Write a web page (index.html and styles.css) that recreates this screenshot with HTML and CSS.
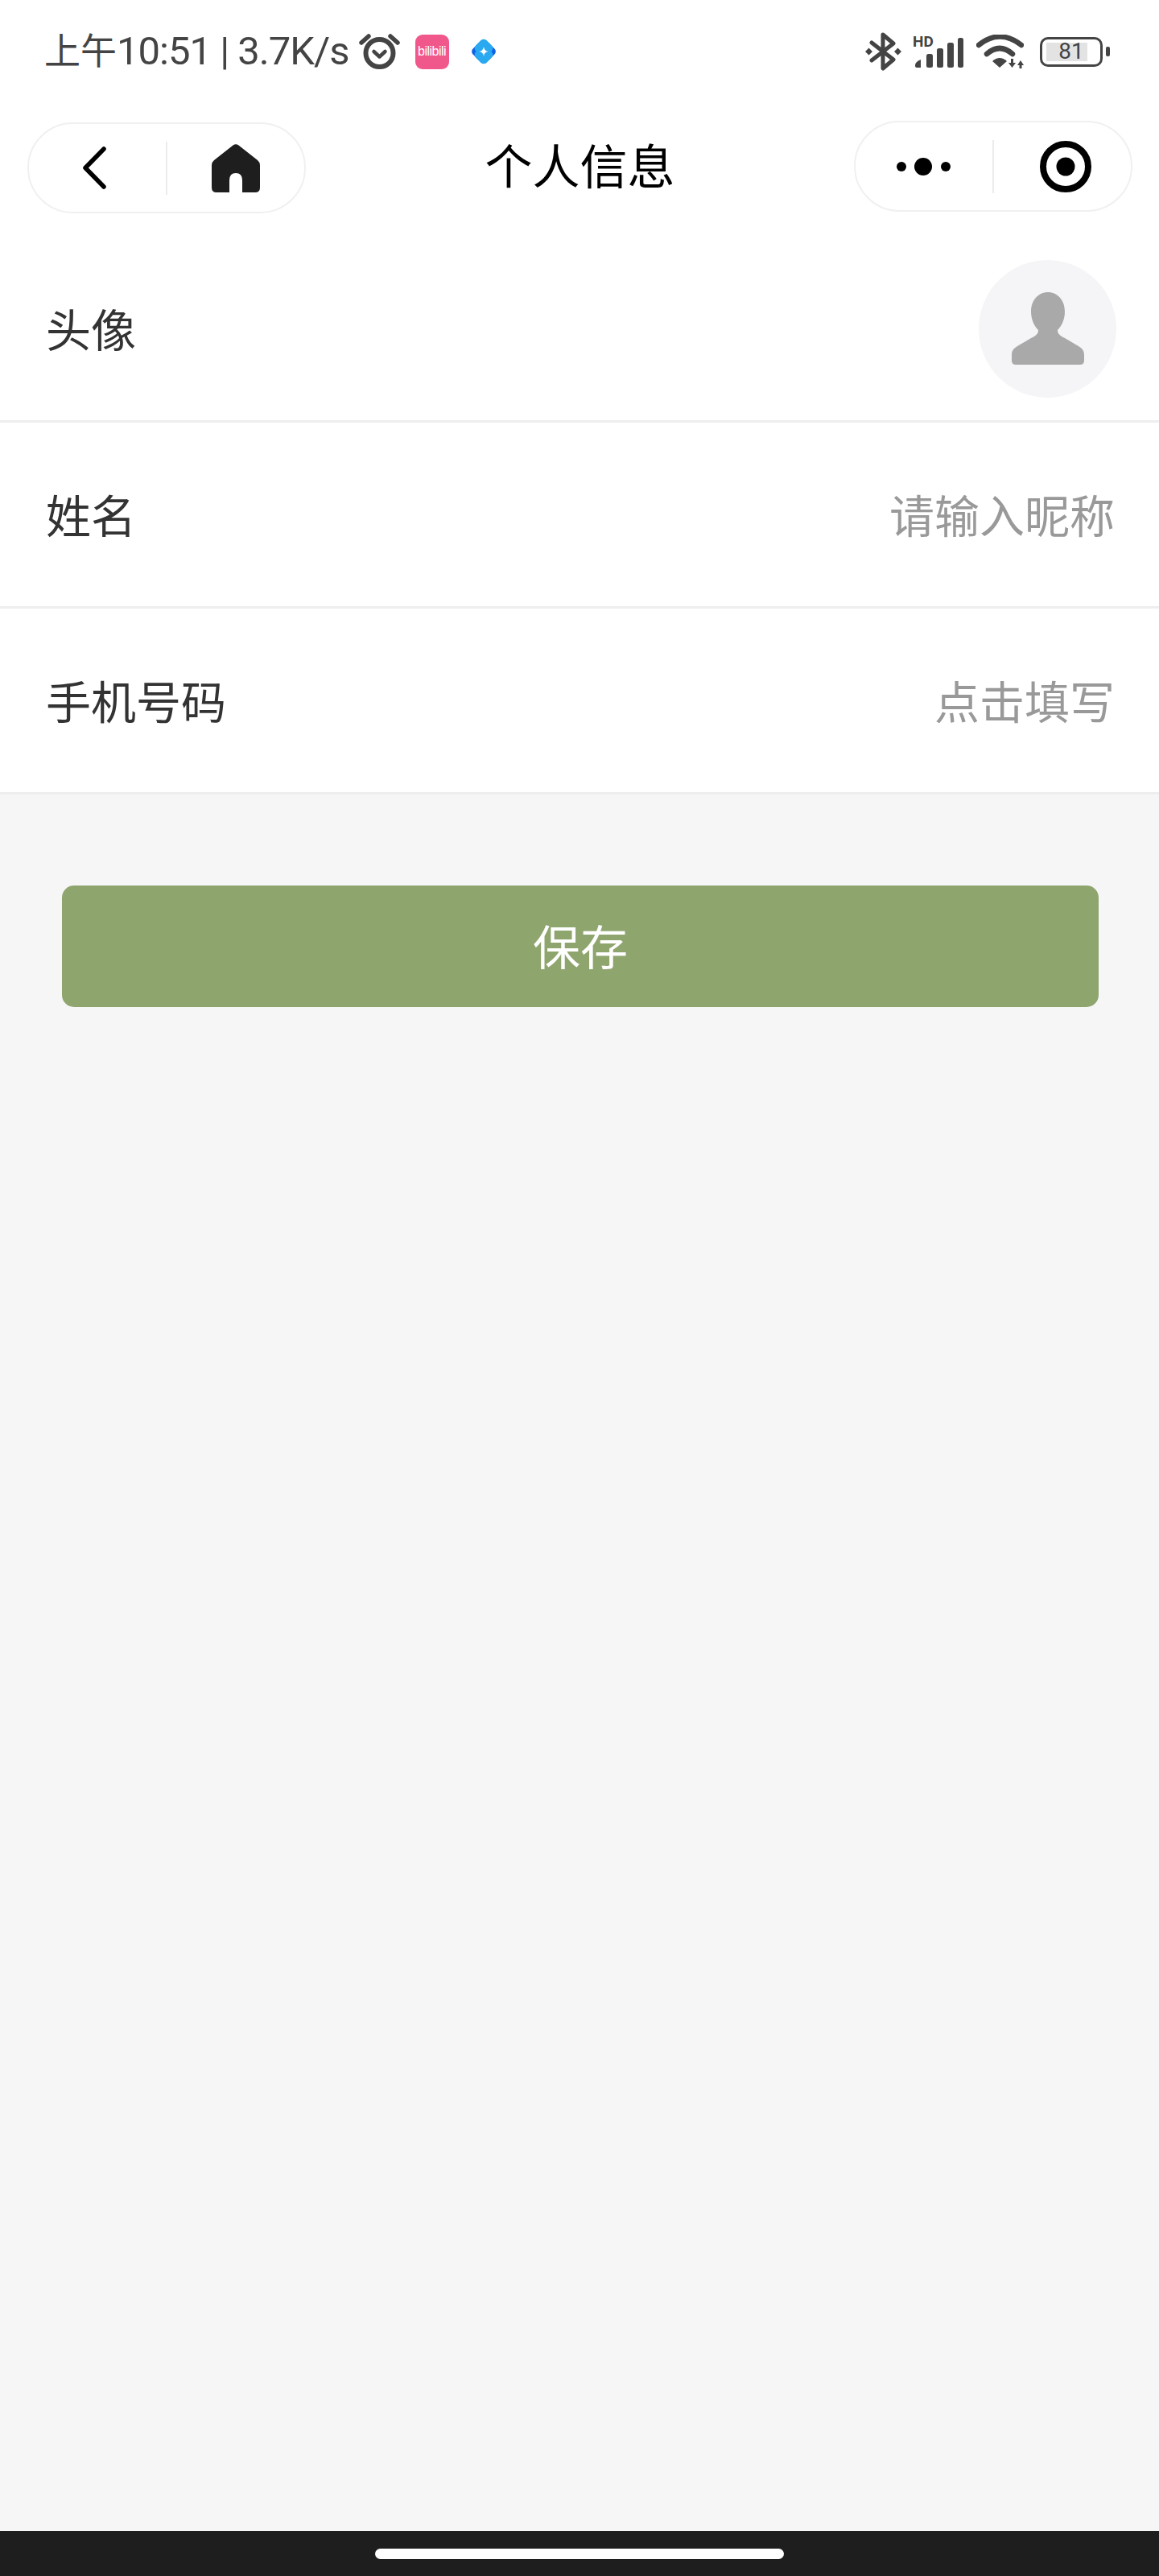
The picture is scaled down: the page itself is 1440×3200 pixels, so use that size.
FILE: index.html
```html
<!DOCTYPE html>
<html lang="zh-CN">
<head>
    <meta charset="UTF-8">
    <meta name="viewport" content="width=device-width, initial-scale=1.0">
    <title>个人信息</title>
    <link rel="stylesheet" href="styles.css">
</head>
<body>
    <div class="page">
        <div class="status-bar">
            <div class="status-left">
                <span class="status-time"><span class="status-ampm">上午</span>10:51 | 3.7K/s</span>
                <svg class="ic-alarm" width="51" height="46" viewBox="0 0 51 46">
                    <circle cx="25.5" cy="25" r="17" fill="none" stroke="#444" stroke-width="6"/>
                    <path d="M3 12L12 4M39 4L48 12" fill="none" stroke="#444" stroke-width="5.5" stroke-linecap="round"/>
                    <path d="M18.5 23L25.5 29.5L32.5 23" fill="none" stroke="#444" stroke-width="4.5" stroke-linecap="round" stroke-linejoin="round"/>
                </svg>
                <div class="ic-pink"><span class="pink-text">bilibili</span></div>
                <svg class="ic-blue" width="34" height="34" viewBox="0 0 34 34">
                    <rect x="4" y="7.5" width="19" height="19" rx="5" transform="rotate(45 13.5 17)" fill="#0f62e6"/>
                    <rect x="11" y="7.5" width="19" height="19" rx="5" transform="rotate(45 20.5 17)" fill="#0f62e6"/>
                    <rect x="7.5" y="3.5" width="19" height="19" rx="5" transform="rotate(45 17 13)" fill="#2aa8f0"/>
                    <rect x="7.5" y="11.5" width="19" height="19" rx="5" transform="rotate(45 17 21)" fill="#2aa8f0"/>
                    <path d="M17 11Q17.6 16.4 23 17Q17.6 17.6 17 23Q16.4 17.6 11 17Q16.4 16.4 17 11Z" fill="#fff"/>
                </svg>
            </div>
            <div class="status-right">
                <svg class="ic-bt" width="45" height="48" viewBox="0 0 45 48">
                    <path d="M8 13L35 34L22 45V3L35 14L8 35" fill="none" stroke="#444" stroke-width="5" stroke-linejoin="round" stroke-linecap="round"/>
                    <path d="M4.500 19.500L9 24L4.500 28.500L0 24ZM40.500 19.500L45 24L40.500 28.500L36 24Z" fill="#444"/>
                </svg>
                <div class="ic-signal">
                    <span class="hd-text">HD</span>
                    <svg width="64" height="40" viewBox="0 0 64 40">
                        <path d="M3 35Q3 31 10 28V38H5Q3 38 3 36Z" fill="#444"/>
                        <rect x="17" y="21" width="8" height="17" rx="2.500" fill="#444"/>
                        <rect x="30" y="14" width="8" height="24" rx="2.500" fill="#444"/>
                        <rect x="43" y="7" width="8" height="31" rx="2.500" fill="#444"/>
                        <rect x="56" y="1" width="7" height="37" rx="2.500" fill="#444"/>
                    </svg>
                </div>
                <svg class="ic-wifi" width="59" height="42" viewBox="0 0 59 42">
                    <path d="M3 13Q29 -8 56 13M13 24Q29 10 45 24" fill="none" stroke="#444" stroke-width="6.500" stroke-linecap="round"/>
                    <path d="M20 33Q29 25 38 33L29 41Z" fill="#444"/>
                    <path d="M40 35H49L44.500 41ZM51 38H59L55 32Z" fill="#444"/>
                    <path d="M43 30H46V37H43ZM53.500 36H56.500V42H53.500Z" fill="#444"/>
                </svg>
                <div class="battery">
                    <div class="battery-body">
                        <div class="battery-fill"></div>
                        <span class="battery-num">81</span>
                    </div>
                    <div class="battery-nub"></div>
                </div>
            </div>
        </div>

        <div class="nav-bar">
            <div class="capsule capsule-left">
                <div class="capsule-cell cell-back">
                    <svg width="30" height="53" viewBox="0 0 30 53">
                        <path d="M27 3L4 26.500L27 50" fill="none" stroke="#000" stroke-width="5.500" stroke-linecap="round" stroke-linejoin="round"/>
                    </svg>
                </div>
                <div class="capsule-line"></div>
                <div class="capsule-cell">
                    <svg width="60" height="60" viewBox="0 0 60 60">
                        <path d="M26.500 1.500Q30 -1 33.500 1.500L57 20Q60 22.500 60 26V54Q60 60 54 60H38V45Q38 36 30 36Q22 36 22 45V60H6Q0 60 0 54V26Q0 22.500 3 20Z" fill="#1e1e1e"/>
                    </svg>
                </div>
            </div>
            <div class="nav-title">个人信息</div>
            <div class="capsule capsule-right">
                <div class="capsule-cell">
                    <svg width="68" height="24" viewBox="0 0 68 24">
                        <circle cx="6" cy="12" r="6" fill="#000"/>
                        <circle cx="33" cy="12" r="11" fill="#000"/>
                        <circle cx="61" cy="12" r="6" fill="#000"/>
                    </svg>
                </div>
                <div class="capsule-line"></div>
                <div class="capsule-cell cell-target">
                    <svg width="64" height="64" viewBox="0 0 64 64">
                        <circle cx="32" cy="32" r="28" fill="none" stroke="#000" stroke-width="8"/>
                        <circle cx="32" cy="32" r="11.500" fill="#000"/>
                    </svg>
                </div>
            </div>
        </div>

        <div class="form">
            <div class="row row-avatar">
                <span class="row-label">头像</span>
                <div class="avatar">
                    <svg width="90" height="90" viewBox="0 0 90 90">
                        <path d="M45 0C33 0 24 10 24 24C24 34 28 42 33 47C33 52 30 54 24 57L7 67C2 70 0 73 0 78V85Q0 90 5 90H85Q90 90 90 85V78C90 73 88 70 83 67L66 57C60 54 57 52 57 47C62 42 66 34 66 24C66 10 57 0 45 0Z" fill="#a9a9a9"/>
                    </svg>
                </div>
            </div>
            <div class="row">
                <span class="row-label">姓名</span>
                <span class="row-hint">请输入昵称</span>
            </div>
            <div class="row">
                <span class="row-label">手机号码</span>
                <span class="row-hint">点击填写</span>
            </div>
        </div>

        <div class="btn-wrap">
            <button class="save-btn">保存</button>
        </div>

        <div class="home-bar">
            <div class="home-pill"></div>
        </div>
    </div>
</body>
</html>
```

FILE: styles.css
```css
* {
    box-sizing: border-box;
}

body {
    margin: 0;
    background-color: #f6f6f6;
    font-family: "Noto Sans CJK SC", "Noto Sans", sans-serif;
}

.page {
    display: flex;
    flex-direction: column;
    height: 3200px;
}

/* status bar */
.status-bar {
    display: flex;
    justify-content: space-between;
    align-items: center;
    height: 132px;
    padding: 0 61px 4px 55px;
    background-color: #fff;
}

.status-left,
.status-right {
    display: flex;
    align-items: center;
}

.status-time {
    font-family: Roboto, "Noto Sans CJK SC", sans-serif;
    font-size: 49px;
    letter-spacing: -1px;
    line-height: 60px;
    color: #444;
    white-space: nowrap;
}

.status-ampm {
    font-size: 45px;
    letter-spacing: 0;
}

.ic-alarm {
    margin-left: 12px;
}

.ic-pink {
    display: flex;
    justify-content: center;
    align-items: center;
    width: 42px;
    height: 43px;
    margin-left: 19px;
    border-radius: 9px;
    background-color: #f0588c;
}

.ic-blue {
    margin-left: 26px;
}

.pink-text {
    font-family: "Liberation Sans", sans-serif;
    font-size: 16px;
    letter-spacing: -0.5px;
    line-height: 1;
    color: #fff;
}

.ic-signal {
    position: relative;
    height: 44px;
    margin-left: 14px;
    padding-top: 4px;
}

.ic-signal svg {
    display: block;
}

.hd-text {
    position: absolute;
    left: 0;
    top: 0;
    font-family: Roboto, sans-serif;
    font-size: 19px;
    font-weight: bold;
    line-height: 19px;
    color: #444;
}

.ic-wifi {
    margin-left: 15px;
}

.battery {
    display: flex;
    align-items: center;
    margin-left: 20px;
}

.battery-body {
    position: relative;
    display: flex;
    justify-content: center;
    align-items: center;
    width: 78px;
    height: 37px;
    border: 3.5px solid #444;
    border-radius: 10px;
}

.battery-fill {
    position: absolute;
    left: 5px;
    top: 4px;
    width: 51px;
    height: 23px;
    background-color: #e3e3e3;
}

.battery-num {
    position: relative;
    font-family: Roboto, sans-serif;
    font-size: 28px;
    line-height: 1;
    color: #444;
}

.battery-nub {
    width: 5px;
    height: 12px;
    margin-left: 4px;
    border-radius: 2px;
    background-color: #444;
}

/* nav bar */
.nav-bar {
    display: flex;
    align-items: flex-start;
    height: 162px;
    padding: 18px 33px 0 34px;
    background-color: #fff;
}

.capsule {
    display: flex;
    align-items: center;
    width: 346px;
    height: 113px;
    border: 2px solid #f0f0f0;
    border-radius: 57px;
    background-color: #fff;
}

.capsule-left {
    margin-top: 2px;
}

.capsule-cell {
    display: flex;
    flex: 1;
    justify-content: center;
    align-items: center;
}

.capsule-cell:first-child {
    flex: 0 0 170px;
}

.cell-back {
    padding-right: 8px;
}

.cell-target {
    padding-left: 8px;
}

.capsule-line {
    flex: 0 0 2px;
    height: 66px;
    background-color: #ececec;
}

.nav-title {
    flex: 1;
    margin-top: 14px;
    text-align: center;
    font-size: 59px;
    line-height: 80px;
    color: #000;
}

/* form rows */
.form {
    background-color: #fff;
}

.row {
    display: flex;
    justify-content: space-between;
    align-items: center;
    height: 231px;
    padding: 0 55px 0 57px;
    border-bottom: 3px solid #eee;
    font-size: 56px;
}

.row-label,
.row-hint {
    margin-top: -4px;
}

.row-label {
    color: #333;
}

.row-hint {
    color: #999;
}

.avatar {
    display: flex;
    justify-content: center;
    align-items: center;
    width: 171px;
    height: 171px;
    margin-right: -2px;
    border-radius: 50%;
    background-color: #f5f5f7;
}

/* save button */
.btn-wrap {
    flex: 1;
    padding: 113px 75px 0 77px;
}

.save-btn {
    display: block;
    width: 100%;
    height: 151px;
    padding: 0 0 4px;
    border: 0;
    border-radius: 15px;
    background-color: #8fa56e;
    color: #fff;
    font-family: inherit;
    font-size: 59px;
}

/* gesture bar */
.home-bar {
    display: flex;
    justify-content: center;
    height: 56px;
    padding-top: 22px;
    background-color: #1e1e1e;
}

.home-pill {
    width: 508px;
    height: 13px;
    border-radius: 7px;
    background-color: #fff;
}
```
